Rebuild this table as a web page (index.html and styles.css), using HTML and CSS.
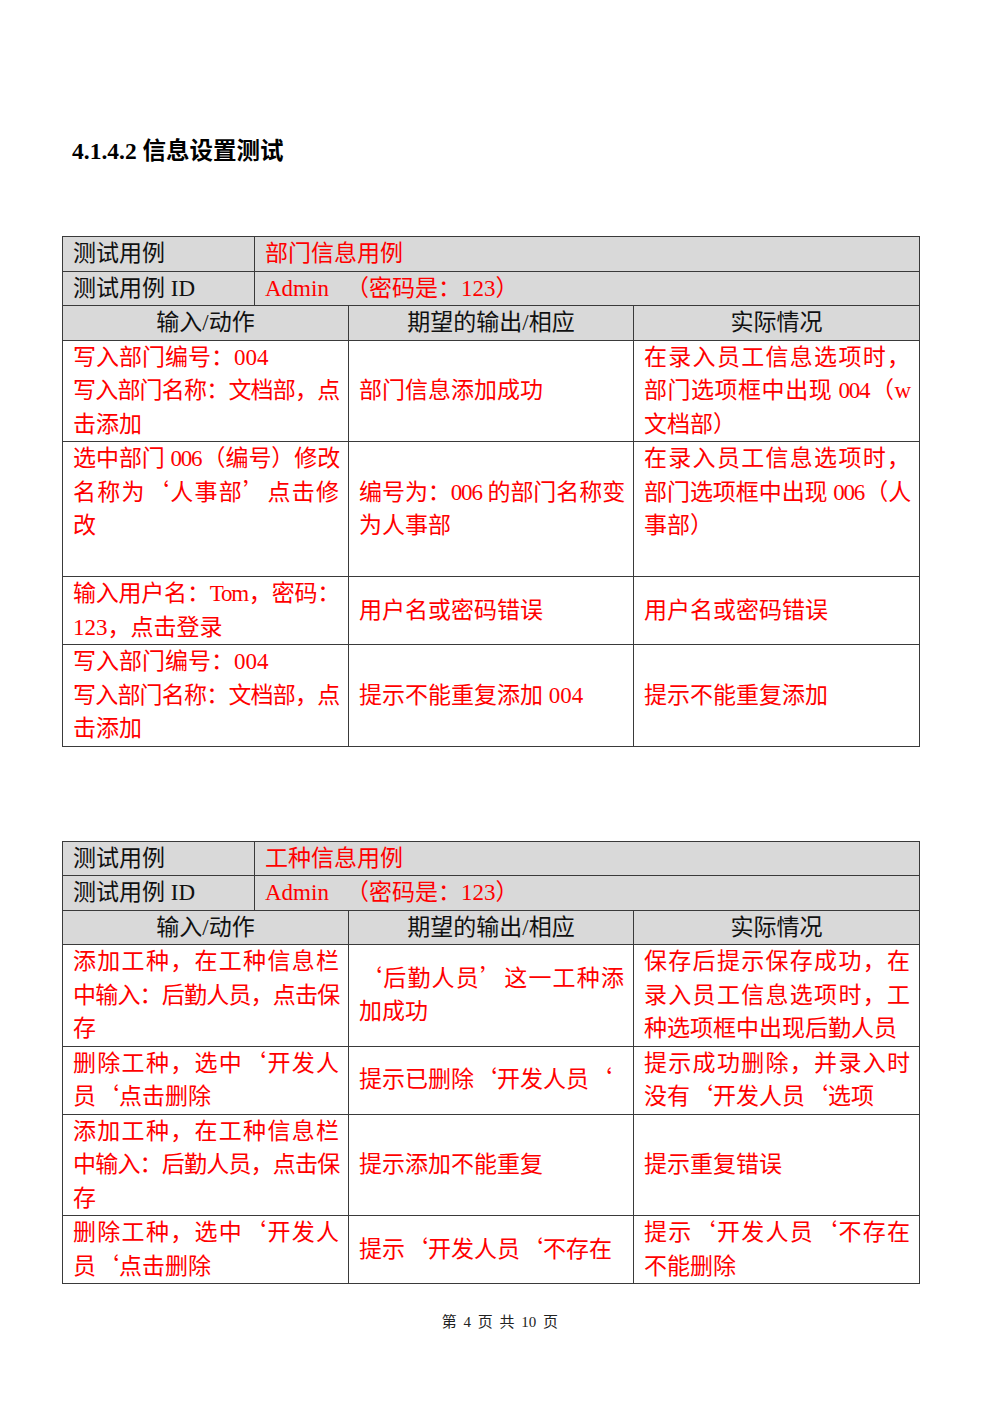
FILE: index.html
```html
<!DOCTYPE html>
<html lang="zh-CN">
<head>
<meta charset="utf-8">
<title>4.1.4.2 信息设置测试</title>
<link rel="stylesheet" href="styles.css">
</head>
<body>
<div class="page">
  <h2 class="title">4.1.4.2 信息设置测试</h2>

  <table class="case">
    <colgroup><col class="c1"><col class="c2"><col class="c3"><col class="c4"></colgroup>
    <tr class="meta"><td class="k">测试用例</td><td colspan="3" class="red">部门信息用例</td></tr>
    <tr class="meta"><td class="k">测试用例 ID</td><td colspan="3" class="red">Admin<span class="gap"></span>（密码是：123）</td></tr>
    <tr class="meta head"><td colspan="2">输入/动作</td><td>期望的输出/相应</td><td>实际情况</td></tr>
    <tr>
      <td colspan="2" class="red"><span class="ln hard">写入部门编号：004</span><span class="ln tight">写入部门名称：文档部，点</span><span class="ln">击添加</span></td>
      <td class="red">部门信息添加成功</td>
      <td class="red"><span class="ln">在录入员工信息选项时，</span><span class="ln tight">部门选项框中出现 004（w</span><span class="ln">文档部）</span></td>
    </tr>
    <tr class="r4">
      <td colspan="2" class="red top"><span class="ln tight">选中部门 006（编号）修改</span><span class="ln">名称为<span class="q">‘</span>人事部<span class="q">’</span>点击修</span><span class="ln">改</span></td>
      <td class="red"><span class="ln tight">编号为：006 的部门名称变</span><span class="ln">为人事部</span></td>
      <td class="red top"><span class="ln">在录入员工信息选项时，</span><span class="ln tight">部门选项框中出现 006（人</span><span class="ln">事部）</span></td>
    </tr>
    <tr>
      <td colspan="2" class="red"><span class="ln tight">输入用户名：Tom，密码：</span><span class="ln">123，点击登录</span></td>
      <td class="red">用户名或密码错误</td>
      <td class="red">用户名或密码错误</td>
    </tr>
    <tr>
      <td colspan="2" class="red"><span class="ln hard">写入部门编号：004</span><span class="ln tight">写入部门名称：文档部，点</span><span class="ln">击添加</span></td>
      <td class="red">提示不能重复添加 004</td>
      <td class="red">提示不能重复添加</td>
    </tr>
  </table>

  <table class="case second">
    <colgroup><col class="c1"><col class="c2"><col class="c3"><col class="c4"></colgroup>
    <tr class="meta"><td class="k">测试用例</td><td colspan="3" class="red">工种信息用例</td></tr>
    <tr class="meta"><td class="k">测试用例 ID</td><td colspan="3" class="red">Admin<span class="gap"></span>（密码是：123）</td></tr>
    <tr class="meta head"><td colspan="2">输入/动作</td><td>期望的输出/相应</td><td>实际情况</td></tr>
    <tr>
      <td colspan="2" class="red"><span class="ln">添加工种，在工种信息栏</span><span class="ln tight">中输入：后勤人员，点击保</span><span class="ln">存</span></td>
      <td class="red"><span class="ln"><span class="q">‘</span>后勤人员<span class="q">’</span>这一工种添</span><span class="ln">加成功</span></td>
      <td class="red"><span class="ln">保存后提示保存成功，在</span><span class="ln">录入员工信息选项时，工</span><span class="ln">种选项框中出现后勤人员</span></td>
    </tr>
    <tr>
      <td colspan="2" class="red"><span class="ln">删除工种，选中<span class="q">‘</span>开发人</span><span class="ln">员<span class="q">‘</span>点击删除</span></td>
      <td class="red">提示已删除<span class="q">‘</span>开发人员<span class="q">‘</span></td>
      <td class="red"><span class="ln">提示成功删除，并录入时</span><span class="ln">没有<span class="q">‘</span>开发人员<span class="q">‘</span>选项</span></td>
    </tr>
    <tr>
      <td colspan="2" class="red"><span class="ln">添加工种，在工种信息栏</span><span class="ln tight">中输入：后勤人员，点击保</span><span class="ln">存</span></td>
      <td class="red">提示添加不能重复</td>
      <td class="red">提示重复错误</td>
    </tr>
    <tr>
      <td colspan="2" class="red"><span class="ln">删除工种，选中<span class="q">‘</span>开发人</span><span class="ln">员<span class="q">‘</span>点击删除</span></td>
      <td class="red">提示<span class="q">‘</span>开发人员<span class="q">‘</span>不存在</td>
      <td class="red"><span class="ln">提示<span class="q">‘</span>开发人员<span class="q">‘</span>不存在</span><span class="ln">不能删除</span></td>
    </tr>
  </table>
</div>
<div class="footer">第 4 页 共 10 页</div>
</body>
</html>
```

FILE: styles.css
```css
html, body {
  margin: 0;
  padding: 0;
  background: #ffffff;
}

body {
  font-family: "Liberation Serif", "Noto Sans CJK SC", serif;
  color: #111111;
}

.page {
  width: 857px;
  padding: 136px 0 0 62px;
}

.title {
  margin: 0 0 69px 10px;
  font-size: 23.5px;
  line-height: 31px;
  font-weight: bold;
  color: #000000;
}

.case {
  width: 857px;
  table-layout: fixed;
  border-collapse: collapse;
  font-size: 23px;
  line-height: 33.5px;
}

.case.second {
  margin-top: 94px;
}

.c1 { width: 192px; }
.c2 { width: 94px; }
.c3 { width: 285px; }
.c4 { width: 286px; }

.case td {
  border: 1px solid #3a3a3a;
  padding: 0 9px 0 10px;
  vertical-align: middle;
  text-align: left;
  white-space: nowrap;
}

.case .meta td {
  background: #d9d9d9;
}

.case .head td {
  text-align: center;
  padding: 0;
}

.case td.top {
  vertical-align: top;
}

.case tr.r4 td {
  height: 134px;
}

.red {
  color: #ff0000;
}

.gap {
  display: inline-block;
  width: 17px;
}

.ln {
  display: block;
}

.ln:not(:last-child) {
  text-align-last: justify;
}

.ln.hard {
  text-align-last: left;
}

.ln.tight {
  letter-spacing: -1.2px;
}

.q {
  font-family: "Noto Sans CJK SC", sans-serif;
  font-feature-settings: "fwid" 1;
  line-height: 1;
}

.footer {
  width: 1000px;
  margin-top: 28px;
  text-align: center;
  font-size: 15px;
  line-height: 20px;
  color: #222222;
  word-spacing: 3px;
}
```
